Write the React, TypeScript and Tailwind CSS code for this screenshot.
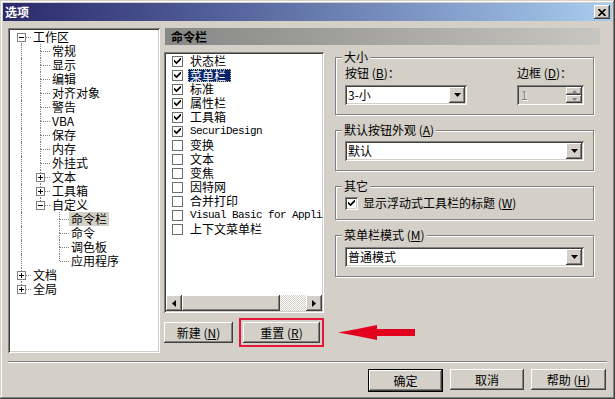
import type { ReactNode } from 'react';

const raised =
  'shadow-[inset_-1px_-1px_0_#404040,inset_1px_1px_0_#fff,inset_-2px_-2px_0_#808080,inset_2px_2px_0_#d4d0c8]';
const sunken =
  'shadow-[inset_1px_1px_0_#808080,inset_-1px_-1px_0_#fff,inset_2px_2px_0_#404040,inset_-2px_-2px_0_#d4d0c8]';

interface TreeNode {
  t: string;
  l: number;
  box?: '+' | '-';
  first?: boolean;
  last?: boolean;
  anc: boolean[];
  sel?: boolean;
}

const tree: TreeNode[] = [
  { t: '工作区', l: 0, box: '-', first: true, anc: [] },
  { t: '常规', l: 1, anc: [true] },
  { t: '显示', l: 1, anc: [true] },
  { t: '编辑', l: 1, anc: [true] },
  { t: '对齐对象', l: 1, anc: [true] },
  { t: '警告', l: 1, anc: [true] },
  { t: 'VBA', l: 1, anc: [true] },
  { t: '保存', l: 1, anc: [true] },
  { t: '内存', l: 1, anc: [true] },
  { t: '外挂式', l: 1, anc: [true] },
  { t: '文本', l: 1, box: '+', anc: [true] },
  { t: '工具箱', l: 1, box: '+', anc: [true] },
  { t: '自定义', l: 1, box: '-', last: true, anc: [true] },
  { t: '命令栏', l: 2, anc: [true, false], sel: true },
  { t: '命令', l: 2, anc: [true, false] },
  { t: '调色板', l: 2, anc: [true, false] },
  { t: '应用程序', l: 2, last: true, anc: [true, false] },
  { t: '文档', l: 0, box: '+', anc: [] },
  { t: '全局', l: 0, box: '+', last: true, anc: [] },
];

const toolbars = [
  { name: '状态栏', on: true },
  { name: '菜单栏', on: true, sel: true },
  { name: '标准', on: true },
  { name: '属性栏', on: true },
  { name: '工具箱', on: true },
  { name: 'SecuriDesign', on: true, mono: true },
  { name: '变换', on: false },
  { name: '文本', on: false },
  { name: '变焦', on: false },
  { name: '因特网', on: false },
  { name: '合并打印', on: false },
  { name: 'Visual Basic for Appli', on: false, mono: true },
  { name: '上下文菜单栏', on: false },
];

const Key = ({ c }: { c: string }) => <span className="underline underline-offset-1">{c}</span>;

function Check() {
  return (
    <svg width="7" height="7" viewBox="0 0 7 7">
      <path d="M0.5 3 L2.5 5 L6.5 1" fill="none" stroke="#000" strokeWidth="1.7" strokeLinecap="square" />
    </svg>
  );
}

function DownTri() {
  return (
    <svg width="7" height="4" viewBox="0 0 7 4">
      <polygon points="0,0 7,0 3.5,4" fill="#000" />
    </svg>
  );
}

function Select({ value }: { value: string }) {
  return (
    <div className={`flex h-[20px] items-center bg-white p-[2px] ${sunken}`}>
      <span className="block h-[16px] flex-1 overflow-hidden pl-[1px] leading-[16px]">{value}</span>
      <div className={`flex h-[16px] w-[16px] items-center justify-center bg-[#d4d0c8] ${raised}`}>
        <DownTri />
      </div>
    </div>
  );
}

function Group({ title, children }: { title: ReactNode; children: ReactNode }) {
  return (
    <div className="flex flex-col border border-[#808080] px-[9px] pb-[9px] shadow-[inset_1px_1px_0_#fff,1px_1px_0_#fff]">
      <span className="-mt-[8px] -ml-[3px] block h-[14px] self-start bg-[#d4d0c8] px-[2px] leading-[14px]">
        {title}
      </span>
      {children}
    </div>
  );
}

function Btn({ children, className = '' }: { children: ReactNode; className?: string }) {
  return (
    <button
      type="button"
      className={`flex h-[21px] items-center justify-center bg-[#d4d0c8] leading-[14px] ${raised} ${className}`}
    >
      {children}
    </button>
  );
}

function TreeRow({ n }: { n: TreeNode }) {
  return (
    <div className="flex h-[14px] items-center">
      {n.anc.map((c, i) => (
        <div key={i} className="relative h-[14px] w-[19px] shrink-0">
          {c && <div className="absolute left-[9px] top-0 h-[14px] border-l border-dotted border-[#808080]" />}
        </div>
      ))}
      <div className="relative h-[14px] w-[19px] shrink-0">
        {!n.first && <div className="absolute left-[9px] top-0 h-[7px] border-l border-dotted border-[#808080]" />}
        {!n.last && <div className="absolute left-[9px] top-[7px] h-[7px] border-l border-dotted border-[#808080]" />}
        <div className="absolute left-[10px] top-[7px] w-[9px] border-t border-dotted border-[#808080]" />
        {n.box && (
          <div className="absolute left-[5px] top-[3px] h-[9px] w-[9px] border border-[#808080] bg-white">
            <div className="absolute left-[1px] top-[3px] h-[1px] w-[5px] bg-black" />
            {n.box === '+' && <div className="absolute left-[3px] top-[1px] h-[5px] w-[1px] bg-black" />}
          </div>
        )}
      </div>
      <span
        className={`inline-block h-[14px] whitespace-nowrap px-[2px] leading-[14px] ${n.sel ? 'bg-[#d4d0c8]' : ''}`}
      >
        {n.t}
      </span>
    </div>
  );
}

export default function App() {
  return (
    <div className="h-[399px] w-[615px] bg-[#d4d0c8] p-[3px] font-['Noto_Sans_CJK_SC',sans-serif] text-[12px] text-black shadow-[inset_-1px_-1px_0_#404040,inset_1px_1px_0_#d4d0c8,inset_-2px_-2px_0_#808080,inset_2px_2px_0_#fff]">
      {/* title bar */}
      <div className="flex h-[18px] items-center justify-between bg-linear-to-r from-[#2b296b] to-[#a9cdf0] pl-[2px] pr-[2px]">
        <span className="block h-[14px] font-bold leading-[14px] text-white">选项</span>
        <div className={`flex h-[14px] w-[16px] items-center justify-center bg-[#d4d0c8] ${raised}`}>
          <svg width="8" height="7" viewBox="0 0 8 7">
            <path d="M0.5 0 L7.5 7 M7.5 0 L0.5 7" stroke="#000" strokeWidth="1.6" />
          </svg>
        </div>
      </div>

      <div className="flex gap-[4px] pl-[5px] pt-[7px]">
        {/* tree */}
        <div className={`h-[325px] w-[152px] shrink-0 overflow-hidden bg-white p-[2px] ${sunken}`}>
          <div className="pl-[2px]">
            {tree.map((n, i) => (
              <TreeRow key={i} n={n} />
            ))}
          </div>
        </div>

        {/* right side */}
        <div className="flex w-[440px] flex-col">
          <div className="ml-[1px] flex h-[17px] w-[435px] items-center bg-linear-to-r from-[#878787] to-[#c8c6c0] pl-[6px] font-bold">
            <span className="block h-[14px] leading-[14px]">命令栏</span>
          </div>

          <div className="mt-[7px] flex gap-[11px]">
            <div className="w-[160px] shrink-0">
              <div className={`flex h-[261px] flex-col bg-white p-[2px] ${sunken}`}>
                <div className="flex-1">
                  {toolbars.map((tb) => (
                    <div key={tb.name} className="flex h-[14px] items-center pl-[6px]">
                      <div className="flex h-[11px] w-[11px] shrink-0 items-center justify-center border border-[#6e6e6e] bg-white">
                        {tb.on && <Check />}
                      </div>
                      <span
                        className={`ml-[5px] inline-block whitespace-nowrap ${
                          tb.sel
                            ? 'h-[13px] border border-dotted border-[#c9c98a] bg-[#0a246a] pl-[1px] pr-[4px] leading-[11px] text-white'
                            : 'h-[14px] pl-[2px] leading-[14px]'
                        } ${tb.mono ? "font-['Liberation_Mono',monospace] text-[11px] tracking-[-0.6px]" : ''}`}
                      >
                        {tb.name}
                      </span>
                    </div>
                  ))}
                </div>
                <div className="flex h-[16px]">
                  <div className={`flex w-[16px] items-center justify-center bg-[#d4d0c8] ${raised}`}>
                    <svg width="4" height="7" viewBox="0 0 4 7">
                      <polygon points="4,0 4,7 0,3.5" fill="#000" />
                    </svg>
                  </div>
                  <div className={`w-[98px] bg-[#d4d0c8] ${raised}`} />
                  <div className="flex-1 bg-[conic-gradient(#d4d0c8_25%,#fff_0_50%,#d4d0c8_0_75%,#fff_0)] bg-[length:2px_2px]" />
                  <div className={`flex w-[16px] items-center justify-center bg-[#d4d0c8] ${raised}`}>
                    <svg width="4" height="7" viewBox="0 0 4 7">
                      <polygon points="0,0 0,7 4,3.5" fill="#000" />
                    </svg>
                  </div>
                </div>
              </div>

              <div className="relative mt-[5px] flex items-center gap-[6px]">
                <Btn className="w-[73px]">
                  新建 (<Key c="N" />)
                </Btn>
                <div className="border-2 border-[#e4163a] p-[2px]">
                  <Btn className="w-[77px]">
                    重置 (<Key c="R" />)
                  </Btn>
                </div>
                <svg className="absolute left-[172px] top-[6px]" width="80" height="17" viewBox="0 0 80 17">
                  <path
                    d="M2 8.5 Q22 5 41 1 L41 5 L79 5 L79 12 L41 12 L41 16 Q22 12 2 8.5 Z"
                    fill="#e3001f"
                  />
                </svg>
              </div>
            </div>

            <div className="mt-[5px] flex w-[259px] shrink-0 flex-col gap-[15px]">
              <Group title="大小">
                <div className="mt-[2px] flex justify-between">
                  <div className="flex w-[122px] flex-col">
                    <span className="block h-[14px] leading-[14px]">
                      按钮 (<Key c="B" />)：
                    </span>
                    <div className="mt-[5px]">
                      <Select value="3-小" />
                    </div>
                  </div>
                  <div className="flex w-[67px] flex-col">
                    <span className="block h-[14px] leading-[14px]">
                      边框 (<Key c="D" />)：
                    </span>
                    <div className={`mt-[5px] flex h-[20px] items-center bg-[#d4d0c8] p-[2px] ${sunken}`}>
                      <span className="block h-[16px] flex-1 pl-[2px] leading-[16px] text-[#808080] [text-shadow:1px_1px_0_#fff]">
                        1
                      </span>
                      <div className="flex h-[16px] w-[16px] flex-col">
                        <div className={`flex h-[8px] items-center justify-center ${raised}`}>
                          <svg width="5" height="3" viewBox="0 0 5 3">
                            <polygon points="0,3 5,3 2.5,0" fill="#808080" />
                          </svg>
                        </div>
                        <div className={`flex h-[8px] items-center justify-center ${raised}`}>
                          <svg width="5" height="3" viewBox="0 0 5 3">
                            <polygon points="0,0 5,0 2.5,3" fill="#808080" />
                          </svg>
                        </div>
                      </div>
                    </div>
                  </div>
                </div>
              </Group>

              <Group
                title={
                  <>
                    默认按钮外观 (<Key c="A" />)
                  </>
                }
              >
                <div className="mt-[4px]">
                  <Select value="默认" />
                </div>
              </Group>

              <Group title="其它">
                <div className="mt-[3px] flex h-[14px] items-center">
                  <div className={`flex h-[13px] w-[13px] items-center justify-center bg-white ${sunken}`}>
                    <Check />
                  </div>
                  <span className="ml-[5px] block h-[14px] leading-[14px]">
                    显示浮动式工具栏的标题 (<Key c="W" />)
                  </span>
                </div>
              </Group>

              <Group
                title={
                  <>
                    菜单栏模式 (<Key c="M" />)
                  </>
                }
              >
                <div className="mt-[5px]">
                  <Select value="普通模式" />
                </div>
              </Group>
            </div>
          </div>
        </div>
      </div>

      {/* separator */}
      <div className="mx-[5px] mt-[8px] h-[2px] border-t border-b border-t-[#808080] border-b-white" />

      {/* dialog buttons */}
      <div className="mt-[6px] flex justify-end gap-[7px] pr-[6px]">
        <div className="border border-black">
          <Btn className="h-[19px] w-[73px]">确定</Btn>
        </div>
        <Btn className="w-[74px]">取消</Btn>
        <Btn className="w-[75px]">
          帮助 (<Key c="H" />)
        </Btn>
      </div>
    </div>
  );
}
